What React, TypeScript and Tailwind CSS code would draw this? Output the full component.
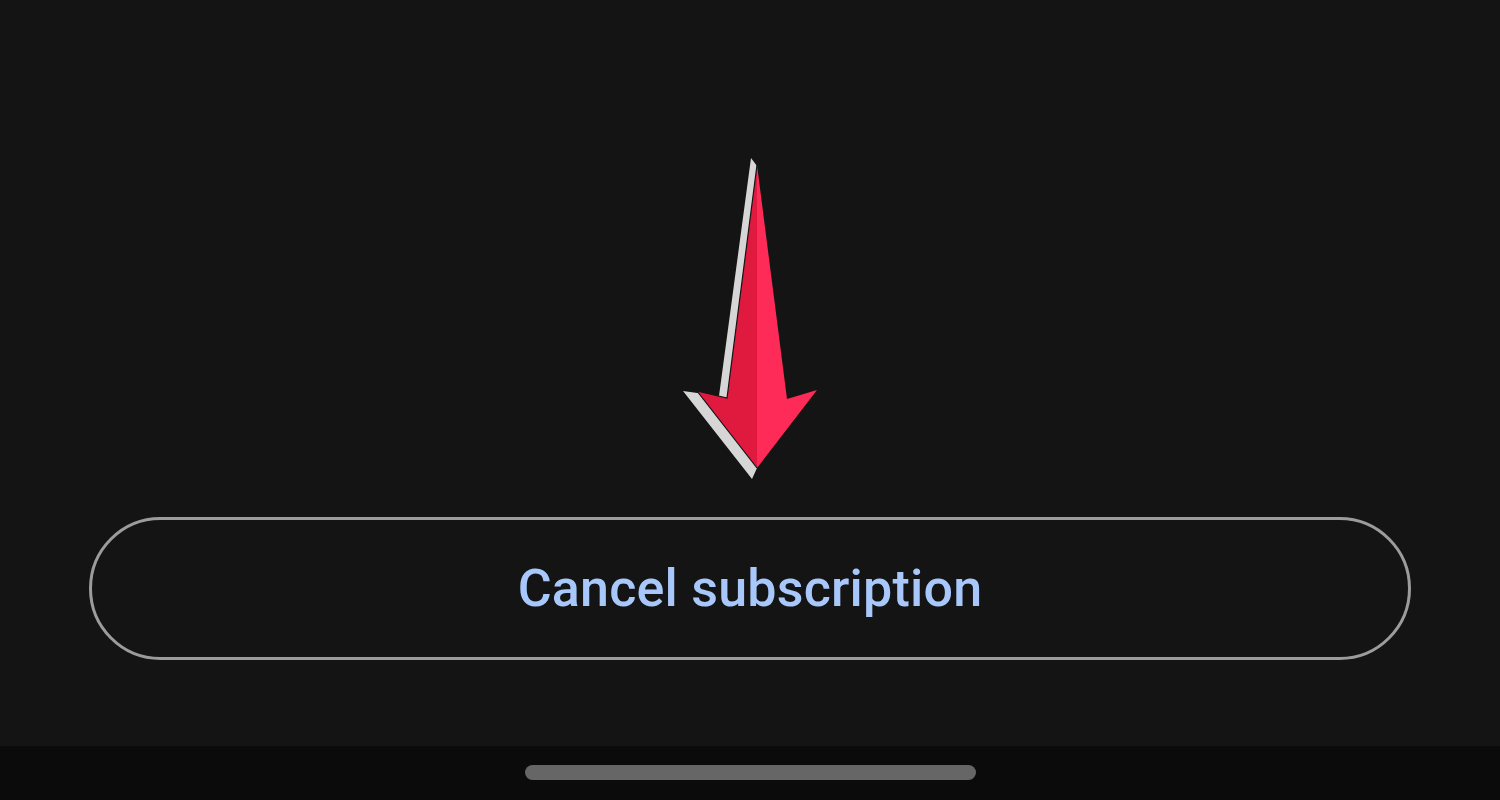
import React from 'react';

// Pointer arrow drawn in page coordinates (x 680–820, y 155–485)
const PointerArrow: React.FC = () => (
  <svg width="140" height="330" viewBox="680 155 140 330" className="block">
    {/* light backing strip on the left edge */}
    <polygon points="751,158 757,166 757,468 752,479 683,391 719,396" fill="#d6d6d6" />
    <polygon points="757,165 727,398 697,391 757,468" fill="#e0193f" />
    <polygon points="757,165 787,399 817,390 757,468" fill="#fe2a58" />
    {/* thin dark seam between the strip and the red body */}
    <polyline points="757,165 727,398 697,391 757,468" fill="none" stroke="#141414" strokeWidth="1.2" strokeLinejoin="miter" />
  </svg>
);

const App: React.FC = () => {
  return (
    <div className="h-[800px] w-full bg-[#141414] flex flex-col overflow-hidden">
      <div className="flex justify-center pt-[155px]">
        <PointerArrow />
      </div>

      <div className="mt-[32px] mx-[89px]">
        <button className="w-full h-[143px] rounded-full border-[3px] border-[#9c9c9c] bg-transparent flex items-center justify-center">
          <span
            className="text-[#a8c7fa] text-[52px] leading-none tracking-[0.2px] font-medium"
            style={{ fontFamily: 'Roboto, "Noto Sans", sans-serif' }}
          >
            Cancel subscription
          </span>
        </button>
      </div>

      <div className="flex-1" />

      <div className="h-[54px] bg-[#0b0b0b] flex justify-center pt-[19px]">
        <div className="w-[451px] h-[15px] rounded-full bg-[#666666]" />
      </div>
    </div>
  );
};

export default App;
